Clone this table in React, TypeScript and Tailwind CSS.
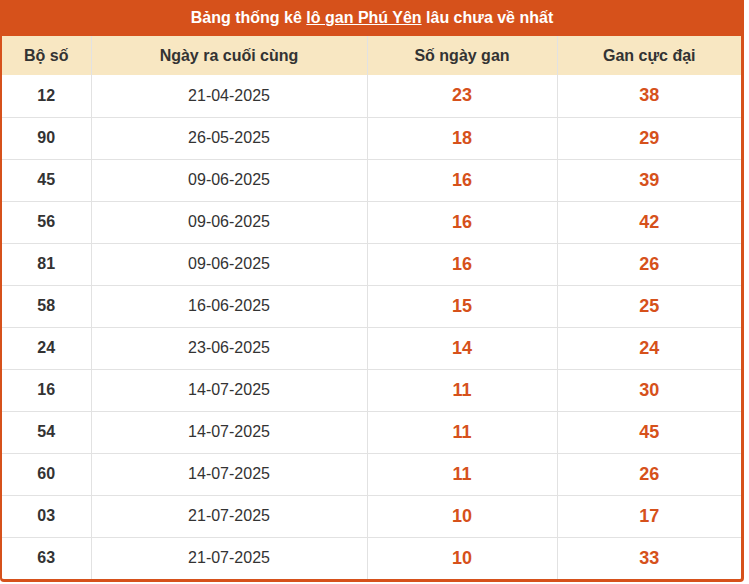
import React from 'react';

const ROWS: [string, string, number, number][] = [
  ['12', '21-04-2025', 23, 38],
  ['90', '26-05-2025', 18, 29],
  ['45', '09-06-2025', 16, 39],
  ['56', '09-06-2025', 16, 42],
  ['81', '09-06-2025', 16, 26],
  ['58', '16-06-2025', 15, 25],
  ['24', '23-06-2025', 14, 24],
  ['16', '14-07-2025', 11, 30],
  ['54', '14-07-2025', 11, 45],
  ['60', '14-07-2025', 11, 26],
  ['03', '21-07-2025', 10, 17],
  ['63', '21-07-2025', 10, 33],
];

const App: React.FC = () => {
  return (
    <div className="bg-white p-0" style={{ fontFamily: '"Liberation Sans", Arial, sans-serif' }}>
      <div className="w-[744px] border-l-2 border-r-[3px] border-b-[3px] border-[#d6511b] rounded-b-[4px] overflow-hidden">
        {/* Title */}
        <div className="h-[36px] bg-[#d6511b] flex items-center justify-center text-white font-bold text-[16px] -ml-[2px] -mr-[3px]">
          <span>
            Bảng thống kê <a href="#" className="underline">lô gan Phú Yên</a> lâu chưa về nhất
          </span>
        </div>

        <table className="w-full border-collapse table-fixed text-[16px] text-[#333]">
          <colgroup>
            <col className="w-[89px]" />
            <col className="w-[276px]" />
            <col className="w-[190px]" />
            <col />
          </colgroup>
          <thead>
            <tr className="bg-[#f8e7c2] h-[39px]">
              <th className="font-bold border-r border-[#e2e2e2]">Bộ số</th>
              <th className="font-bold border-r border-[#e2e2e2]">Ngày ra cuối cùng</th>
              <th className="font-bold border-r border-[#e2e2e2]">Số ngày gan</th>
              <th className="font-bold">Gan cực đại</th>
            </tr>
          </thead>
          <tbody>
            {ROWS.map(([num, date, days, max], i) => (
              <tr key={i} className={`h-[42px] ${i > 0 ? 'border-t border-[#e2e2e2]' : ''}`}>
                <td className="text-center font-bold border-r border-[#e2e2e2]">{num}</td>
                <td className="text-center border-r border-[#e2e2e2]">{date}</td>
                <td className="text-center font-bold text-[18px] text-[#d6511b] border-r border-[#e2e2e2]">{days}</td>
                <td className="text-center font-bold text-[18px] text-[#d6511b]">{max}</td>
              </tr>
            ))}
          </tbody>
        </table>
      </div>
    </div>
  );
};

export default App;
